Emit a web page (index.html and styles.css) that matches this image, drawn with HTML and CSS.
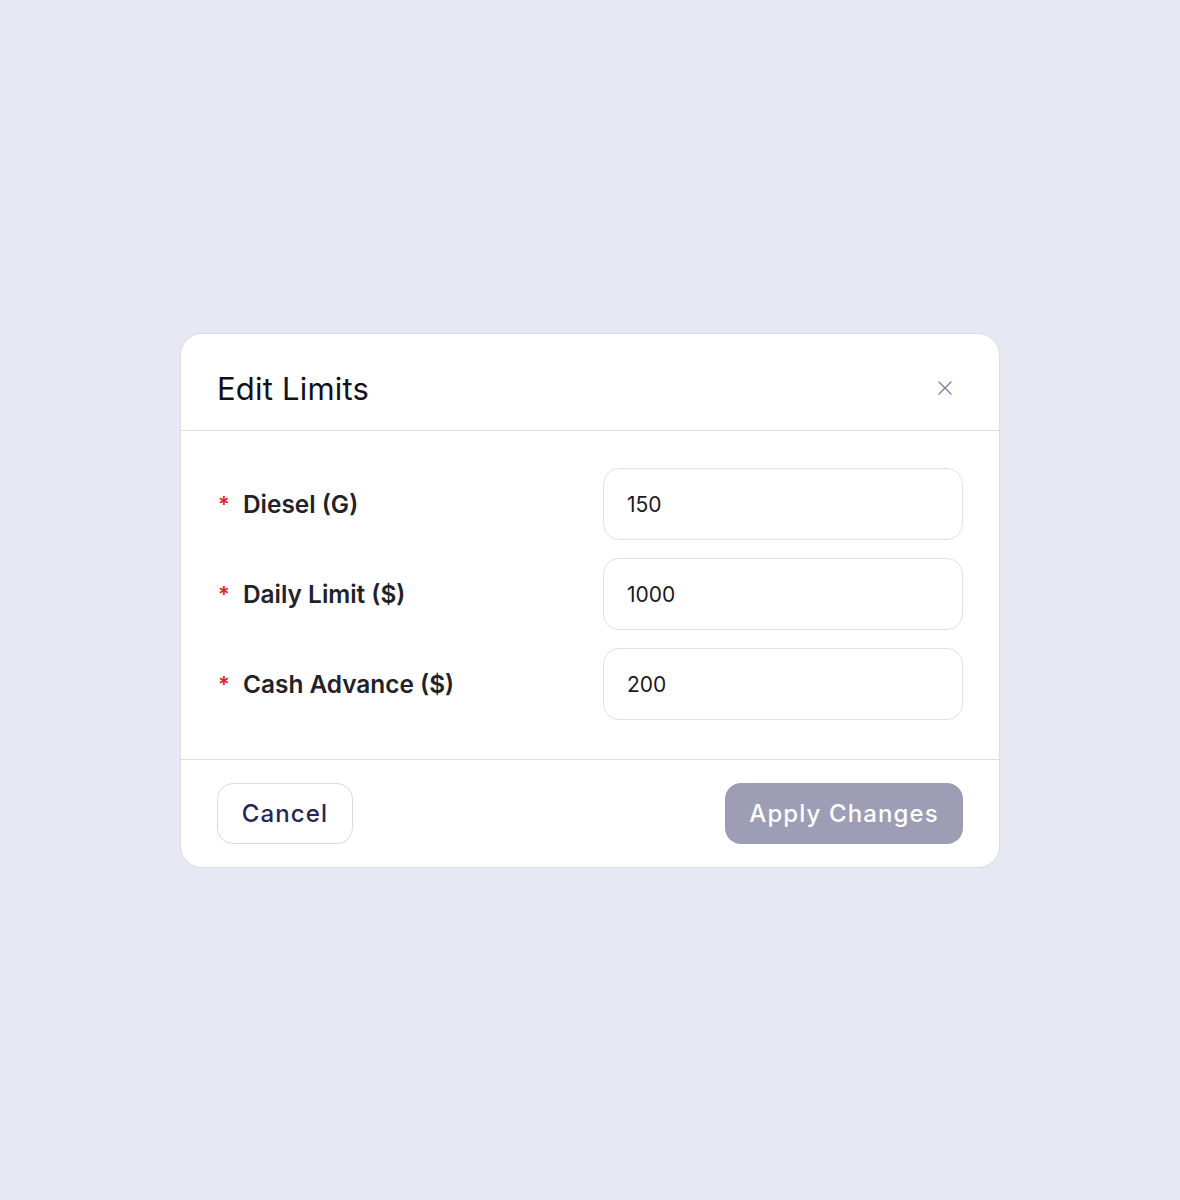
FILE: index.html
```html
<!DOCTYPE html>
<html>
<head>
<meta charset="utf-8">
<link rel="stylesheet" href="styles.css">
</head>
<body>
<div class="page">
  <div class="modal">
    <div class="modal-header">
      <h2 class="title">Edit Limits</h2>
      <button class="close" aria-label="Close">
        <svg width="16" height="16" viewBox="0 0 16 16"><path d="M2 2L14 14M14 2L2 14" stroke="#7d7d9c" stroke-width="1.4" stroke-linecap="round"/></svg>
      </button>
    </div>
    <div class="modal-body">
      <div class="row">
        <label class="label"><span class="req">*</span>Diesel (G)</label>
        <div class="input">150</div>
      </div>
      <div class="row">
        <label class="label"><span class="req">*</span>Daily Limit ($)</label>
        <div class="input">1000</div>
      </div>
      <div class="row">
        <label class="label"><span class="req">*</span>Cash Advance ($)</label>
        <div class="input">200</div>
      </div>
    </div>
    <div class="modal-footer">
      <button class="btn btn-cancel">Cancel</button>
      <button class="btn btn-apply">Apply Changes</button>
    </div>
  </div>
</div>
</body>
</html>
```

FILE: styles.css
```css
* { box-sizing: border-box; }
html, body { margin: 0; padding: 0; }
body {
  background: #e8e8f4;
  font-family: Inter, "Noto Sans", sans-serif;
  width: 1180px;
  height: 1200px;
}
.page {
  padding-top: 333px;
  padding-left: 180px;
}
.modal {
  width: 820px;
  background: #fff;
  border: 1px solid #dcdce8;
  border-radius: 22px;
  overflow: hidden;
}
.modal-header {
  height: 97px;
  border-bottom: 1.5px solid #dcdce8;
  display: flex;
  align-items: center;
  justify-content: space-between;
  padding: 12px 46px 0 36px;
}
.title {
  margin: 0;
  font-size: 31px;
  font-weight: 400;
  color: #111118;
  letter-spacing: 0.2px;
}
.close {
  background: none;
  border: 0;
  padding: 0;
  width: 16px;
  height: 16px;
  display: flex;
}
.modal-body {
  padding: 37px 36px 39px 37px;
  display: flex;
  flex-direction: column;
  gap: 18px;
  border-bottom: 1.5px solid #dcdce8;
}
.row {
  display: flex;
  align-items: center;
  justify-content: space-between;
}
.label {
  font-size: 24.4px;
  font-weight: 600;
  color: #222228;
  display: flex;
  align-items: center;
}
.req {
  color: #e02424;
  font-size: 22px;
  width: 25px;
  margin-top: -1px;
}
.input {
  width: 360px;
  height: 72px;
  border: 1.5px solid #e0e0ea;
  border-radius: 16px;
  padding: 0 23px;
  display: flex;
  align-items: center;
  font-size: 21px;
  color: #1a1a22;
}
.modal-footer {
  padding: 23px 36px 23px 36px;
  display: flex;
  justify-content: space-between;
  align-items: center;
}
.btn {
  font-family: Inter, "Noto Sans", sans-serif;
  height: 61px;
  border-radius: 16px;
  font-size: 24px;
  font-weight: 500;
  letter-spacing: 1.1px;
  padding: 0 20px;
}
.btn-cancel {
  background: #fff;
  border: 1.5px solid #d8d8e6;
  color: #26265a;
  width: 136px;
}
.btn-apply {
  background: #9d9db5;
  border: 0;
  color: #fff;
  width: 238px;
}
```
